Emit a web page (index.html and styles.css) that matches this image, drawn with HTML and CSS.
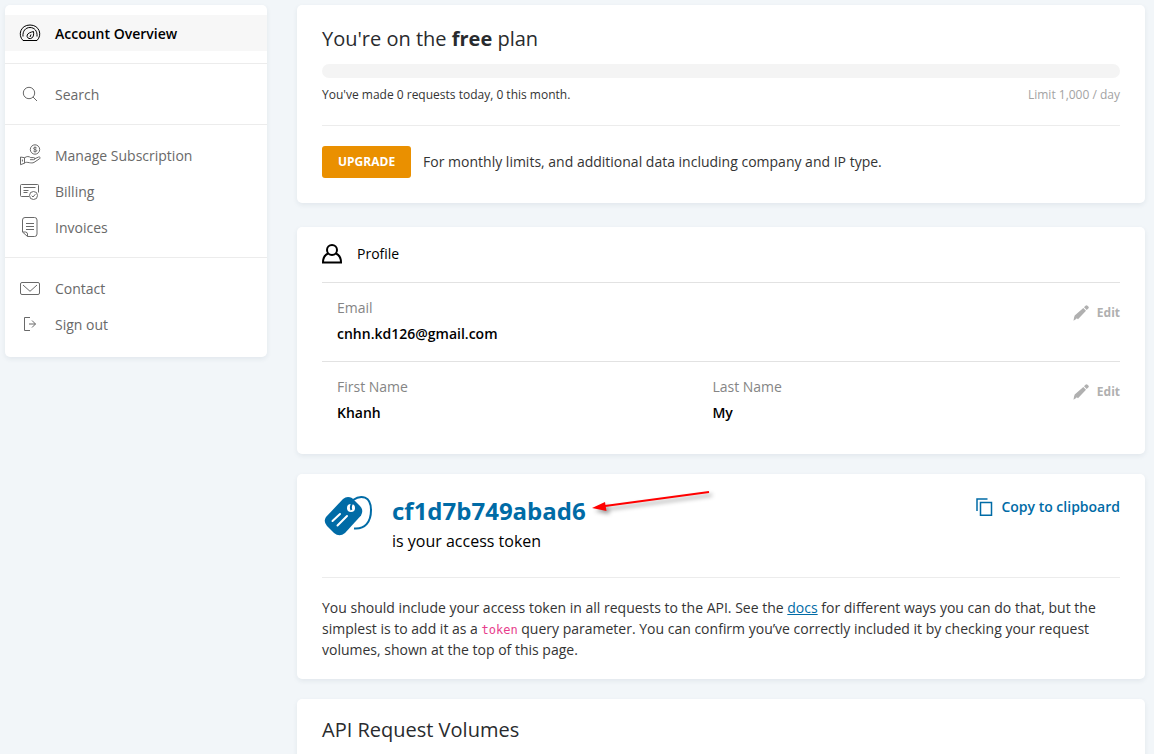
FILE: index.html
```html
<!DOCTYPE html>
<html lang="en">
<head>
<meta charset="utf-8">
<meta name="viewport" content="width=device-width, initial-scale=1">
<title>Account Overview</title>
<link rel="stylesheet" href="styles.css">
</head>
<body>
<div class="page">
  <nav class="sidebar" aria-label="Account">
    <div class="nav-group">
      <a class="nav-link active" href="#overview" aria-current="page">
        <svg class="nav-icon" viewBox="0 0 22 22"><path d="M4 18.500C-1.500 13 1.500 3 11 3s12.500 10 7 15.500z"/><path d="M4 14.500C3.500 9 6.500 5.500 11 5.500s7.500 3.500 7 9"/><path d="M14.500 9.500c.5 3 0 6.500-2.800 7-2.500.6-4.200-1.500-3.500-3.500.8-2 3.300-2.700 6.300-3.500zM12 12.500l-1 2.500"/></svg>
        <span>Account Overview</span></a>
    </div>
    <div class="nav-group">
      <a class="nav-link" href="#search">
        <svg class="nav-icon" viewBox="0 0 22 22"><circle cx="10" cy="10" r="5.700"/><path d="M14 14l4 4"/></svg>
        <span>Search</span></a>
    </div>
    <div class="nav-group">
      <a class="nav-link" href="#subscription">
        <svg class="nav-icon" viewBox="0 0 22 22"><circle cx="16" cy="5.500" r="4.700"/><path d="M17.700 4c-1.200-1-3.200-.7-3.200.4 0 1.600 3.300.7 3.300 2.300 0 1.100-2.200 1.300-3.400.3M16 2.500v6"/><path d="M1.500 13l4 .7v5.500l-4 1.500zM5.500 13.800c2.500-1.800 4.500-1.500 6.200-.2h3c1.600 0 1.600 2 0 2.100H11M15.200 15l4.400-2c1.700-.3 2 1 .9 1.800L15 18.400c-1.300.8-3 .5-4.500.3-2.500-.4-3.500-.8-5.500.4"/><path d="M3.400 15.500v2"/></svg>
        <span>Manage Subscription</span></a>
      <a class="nav-link" href="#billing">
        <svg class="nav-icon" viewBox="0 0 22 22"><path d="M10 16.500H2.500q-1 0-1-1v-10q0-1 1-1h16q1 0 1 1v7M4.500 7.500h12M4.500 10.500h5M4.500 12.500h4"/><circle cx="14.500" cy="15.500" r="4"/><path d="M12.700 15.700l1.300 1.300 2.400-2.800"/></svg>
        <span>Billing</span></a>
      <a class="nav-link" href="#invoices">
        <svg class="nav-icon" viewBox="0 0 22 22"><path d="M3.500 16V4q0-2.500 2.500-2.500h9.500Q18 1.500 18 4v14q0 2.500-2.500 2.500H8.500L3.500 16h3q2 .2 2 2V20.500M7 7.500h8M7 10.500h8M7 13.500h8"/></svg>
        <span>Invoices</span></a>
    </div>
    <div class="nav-group">
      <a class="nav-link" href="#contact">
        <svg class="nav-icon" viewBox="0 0 22 22"><rect x="1.500" y="5.500" width="19" height="12" rx="1.500"/><path d="M4 8l7 6.300L18 8"/></svg>
        <span>Contact</span></a>
      <a class="nav-link" href="#signout">
        <svg class="nav-icon" viewBox="0 0 22 22"><path d="M11 4.500H5.500v13H11M10 11h6.500M13 7.500l3.500 3.500-3.500 3.500"/></svg>
        <span>Sign out</span></a>
    </div>
  </nav>

  <main class="main">
    <section class="card plan">
      <h1 class="title">You're on the <strong>free</strong> plan</h1>
      <div class="meter" role="progressbar" aria-label="Requests used" aria-valuenow="0" aria-valuemin="0" aria-valuemax="1000"></div>
      <div class="usage">
        <span>You've made 0 requests today, 0 this month.</span>
        <span class="limit">Limit 1,000 / day</span>
      </div>
      <div class="upgrade">
        <button class="upgrade-button" type="button">UPGRADE</button>
        <span>For monthly limits, and additional data including company and IP type.</span>
      </div>
    </section>

    <section class="card profile">
      <h2 class="profile-title">
        <svg class="profile-icon" viewBox="0 0 20 20"><circle cx="10" cy="6" r="5"/><path d="M6 9.500C2.500 11 1 14 1 18.500h18c0-4.500-1.500-7.500-5-9"/></svg>
        Profile</h2>
      <div class="profile-row">
        <dl class="field"><dt>Email</dt><dd>cnhn.kd126@gmail.com</dd></dl>
        <button class="edit" type="button">
          <svg class="edit-icon" viewBox="0 0 16 16"><path d="M1.700 10.500L10.300 3 13 5.700 5 14.300 3.800 13.200l-1 1L.5 15.700 1 12.800zM11 2.300L12.500.8q1-1 2 0l.8.8q1 1 0 2L13.700 5z"/></svg>
          Edit</button>
      </div>
      <div class="profile-row">
        <dl class="field"><dt>First Name</dt><dd>Khanh</dd></dl>
        <dl class="field"><dt>Last Name</dt><dd>My</dd></dl>
        <button class="edit" type="button">
          <svg class="edit-icon" viewBox="0 0 16 16"><path d="M1.700 10.500L10.300 3 13 5.700 5 14.300 3.800 13.200l-1 1L.5 15.700 1 12.800zM11 2.300L12.500.8q1-1 2 0l.8.8q1 1 0 2L13.700 5z"/></svg>
          Edit</button>
      </div>
    </section>

    <section class="card token">
      <div class="token-head">
        <svg class="token-icon" viewBox="0 0 50 44"><path class="tag" d="M20 4Q24 .500 29 3l8 8q4 4 1 9.500L22 38q-5.500 4.500-11 0L4 31q-4-4.500-1-9z"/><path class="string" d="M30 5C38-.500 48 1 48 15c0 12-6 19.500-17 18.500"/><circle class="hole" cx="28" cy="13" r="4"/><path class="tie" d="M28.500 15q-1.500-3 .5-6.500"/><path class="lines" d="M9.500 26l7.500-7M14.500 30.500L24 21"/></svg>
        <div>
          <h2 class="token-value">cf1d7b749abad6
            <svg class="pointer" viewBox="0 0 126 28" aria-hidden="true"><path class="pointer-line" d="M14 18L118 4"/><path class="pointer-head" d="M1 20l13-6 1.500 9z"/></svg></h2>
          <p class="token-caption">is your access token</p>
        </div>
        <button class="copy" type="button">
          <svg class="copy-icon" viewBox="0 0 17 18"><path d="M1 13V1h10.500M4.500 4.500h11v12.700h-11z"/></svg>
          Copy to clipboard</button>
      </div>
      <p class="token-help">You should include your access token in all requests to the API. See the <a href="#docs">docs</a> for different ways you can do that, but the simplest is to add it as a <code>token</code> query parameter. You can confirm you’ve correctly included it by checking your request volumes, shown at the top of this page.</p>
    </section>

    <section class="card volumes">
      <h2 class="title">API Request Volumes</h2>
    </section>
  </main>
</div>
</body>
</html>
```
FILE: styles.css
```css
* { box-sizing: border-box; }

body {
  margin: 0;
  background: #f2f6f9;
  color: #343434;
  font: 14px/21px "Open Sans", "Noto Sans", sans-serif;
}

h1, h2, p, dl, dd { margin: 0; }

button {
  border: 0;
  padding: 0;
  background: none;
  font: inherit;
  cursor: pointer;
}

svg { flex: none; fill: none; stroke: currentColor; }

.page {
  display: flex;
  align-items: flex-start;
  gap: 30px;
  padding: 5px 9px 0 5px;
}

.sidebar, .card {
  background: #fff;
  border-radius: 5px;
  box-shadow: 0 2px 5px rgba(40, 70, 90, 0.08);
}

.sidebar { flex: none; width: 262px; padding-bottom: 3px; }

.nav-group { padding: 12px 0; }
.nav-group:first-child { padding-top: 10px; }
.nav-group + .nav-group { border-top: 1px solid #ececec; }

.nav-link {
  display: flex;
  align-items: center;
  gap: 14px;
  height: 36px;
  padding-left: 14px;
  padding-right: 14px;
  color: #696969;
  text-decoration: none;
}
.nav-link.active { background: #f7f7f7; color: #000; font-weight: 600; }
.nav-icon { width: 22px; height: 22px; }

.main { flex: 1; min-width: 0; }
.card { padding: 0 25px; margin-bottom: 20px; }

.title { font-size: 20px; line-height: 28px; font-weight: 400; color: #292b2e; }

.plan { padding-top: 20px; padding-bottom: 25px; margin-bottom: 24px; }
.meter { height: 14px; margin-top: 11px; border-radius: 7px; background: #f4f4f4; }
.usage {
  display: flex;
  justify-content: space-between;
  padding: 7px 0 20px;
  border-bottom: 1px solid #ececec;
  font-size: 12px;
  line-height: 20px;
}
.limit { color: #a3a3a3; }
.upgrade {
  display: flex;
  align-items: center;
  gap: 12px;
  margin-top: 20px;
  line-height: 20px;
}
.upgrade-button {
  height: 32px;
  padding: 0 16px;
  border-radius: 3px;
  background: #ea9000;
  color: #fff;
  font-size: 12px;
  font-weight: 700;
}

.profile { padding-bottom: 14px; }
.profile-title {
  display: flex;
  align-items: center;
  gap: 15px;
  height: 55px;
  padding-bottom: 2px;
  font-size: 14px;
  font-weight: 400;
  color: #000;
}
.profile-icon { width: 20px; height: 20px; stroke-width: 2; }
.profile-row {
  display: flex;
  align-items: flex-start;
  height: 79px;
  padding: 12px 0 0 15px;
  border-top: 1px solid #e2e2e2;
}
.field { flex: 1; line-height: 26px; }
.field:first-child { flex-basis: 15px; }
.field dt { color: #858585; }
.field dd { color: #000; font-weight: 600; }
.edit {
  display: flex;
  align-items: center;
  gap: 8px;
  margin-top: 7px;
  color: #b0b0b0;
  font-size: 12px;
  line-height: 21px;
  font-weight: 700;
}
.edit-icon { width: 16px; height: 16px; fill: currentColor; stroke: none; }

.token { padding-bottom: 19px; }
.token-head {
  display: flex;
  align-items: flex-start;
  gap: 19px;
  height: 104px;
  padding-top: 21px;
  border-bottom: 1px solid #ececec;
}
.token-icon { width: 50px; height: 44px; margin-left: 1px; }
.tag { fill: #006ba6; stroke: none; }
.string { stroke: #006ba6; stroke-width: 2; }
.hole { fill: #fff; stroke: none; }
.tie { stroke: #006ba6; stroke-width: 2; }
.lines { stroke: #fff; stroke-width: 2; stroke-linecap: round; }
.token-value {
  position: relative;
  color: #006ba6;
  font-size: 24px;
  line-height: 32px;
  font-weight: 700;
}
.token-caption { color: #000; font-size: 16px; line-height: 28px; }
.pointer {
  position: absolute;
  left: 100%;
  top: -7px;
  width: 126px;
  height: 28px;
  margin-left: 5px;
  filter: drop-shadow(3px 3px 2px rgba(0, 0, 0, 0.4));
}
.pointer-line { stroke: #f00; stroke-width: 2; }
.pointer-head { fill: #f00; stroke: none; }
.copy {
  display: flex;
  align-items: center;
  gap: 8px;
  margin-top: 1px;
  margin-left: auto;
  color: #006ba6;
  font-weight: 600;
}
.copy-icon { width: 17px; height: 18px; stroke-width: 1.5; }

.token-help { padding-top: 19px; }
.token-help a { color: #006ba6; }
code { color: #e83e8c; font: 12px/1 "DejaVu Sans Mono", monospace; }

.volumes { padding-top: 17px; padding-bottom: 40px; margin-bottom: 0; }
```
